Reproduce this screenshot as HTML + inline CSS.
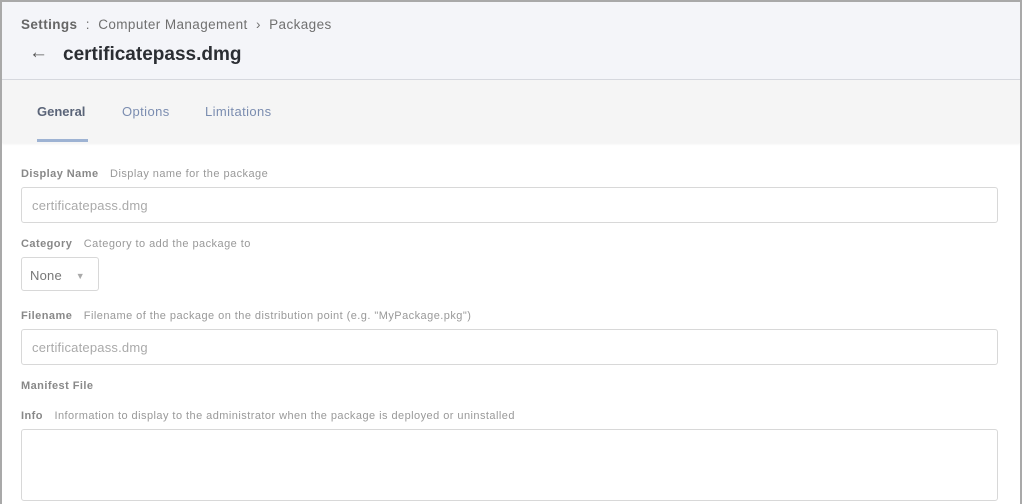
<!DOCTYPE html>
<html><head><style>
*{margin:0;padding:0;box-sizing:border-box}
body{width:1022px;height:504px;overflow:hidden;font-family:"Liberation Sans",sans-serif;background:#fff}
.frame{position:absolute;left:0;top:0;width:1022px;height:504px;border:2px solid #a9a9a9;border-bottom:none;overflow:hidden}
.hdr{position:absolute;left:0;top:0;width:1018px;height:78px;background:#f4f5f9;border-bottom:1px solid #d6d8de}
.bc{position:absolute;left:19px;top:15px;font-size:13.5px;letter-spacing:.4px;color:#707070}
.bc b{color:#666}
.title{position:absolute;left:61px;top:42px;font-size:19px;font-weight:bold;color:#2b2e33}
.arrow{position:absolute;left:27px;top:40px;font-size:19px;color:#555}
.tabs{position:absolute;left:0;top:78px;width:1018px;height:63px;background:#f5f5f5;box-shadow:0 1px 2px rgba(0,0,0,.06)}
.tab{position:absolute;top:24px;font-size:13px;letter-spacing:.4px;color:#7b8db0}
.tab.a{color:#5a6478;font-weight:bold;letter-spacing:0}
.ul{position:absolute;left:35px;top:59px;width:51px;height:3px;background:#9eb3d3}
.lab{position:absolute;left:19px;font-size:11px;letter-spacing:.45px;color:#999}
.lab b{color:#888;margin-right:8px}
.inp{position:absolute;left:19px;width:977px;height:36px;border:1px solid #d8d8d8;border-radius:3px;font-size:13px;letter-spacing:.2px;color:#aaa;padding:10px 0 0 10px}
</style></head><body><div class="frame">
<div class="hdr">
<div class="bc"><b>Settings</b>&nbsp; : &nbsp;Computer Management &nbsp;›&nbsp; Packages</div>
<div class="arrow">←</div>
<div class="title">certificatepass.dmg</div>
</div>
<div class="tabs">
<div class="tab a" style="left:35px">General</div>
<div class="tab" style="left:120px">Options</div>
<div class="tab" style="left:203px">Limitations</div>
<div class="ul"></div>
</div>
<div class="lab" style="top:166px"><b>Display Name</b> Display name for the package</div>
<div class="inp" style="top:185px">certificatepass.dmg</div>
<div class="lab" style="top:236px"><b>Category</b> Category to add the package to</div>
<div class="inp" style="top:255px;width:78px;height:34px;color:#777;padding-left:8px">None <span style="font-size:9px;color:#aaa;margin-left:10px;vertical-align:1px">▼</span></div>
<div class="lab" style="top:308px"><b>Filename</b> Filename of the package on the distribution point (e.g. "MyPackage.pkg")</div>
<div class="inp" style="top:327px">certificatepass.dmg</div>
<div class="lab" style="top:378px"><b>Manifest File</b></div>
<div class="lab" style="top:408px"><b>Info</b> Information to display to the administrator when the package is deployed or uninstalled</div>
<div class="inp" style="top:427px;height:72px"></div>
</div></body></html>
